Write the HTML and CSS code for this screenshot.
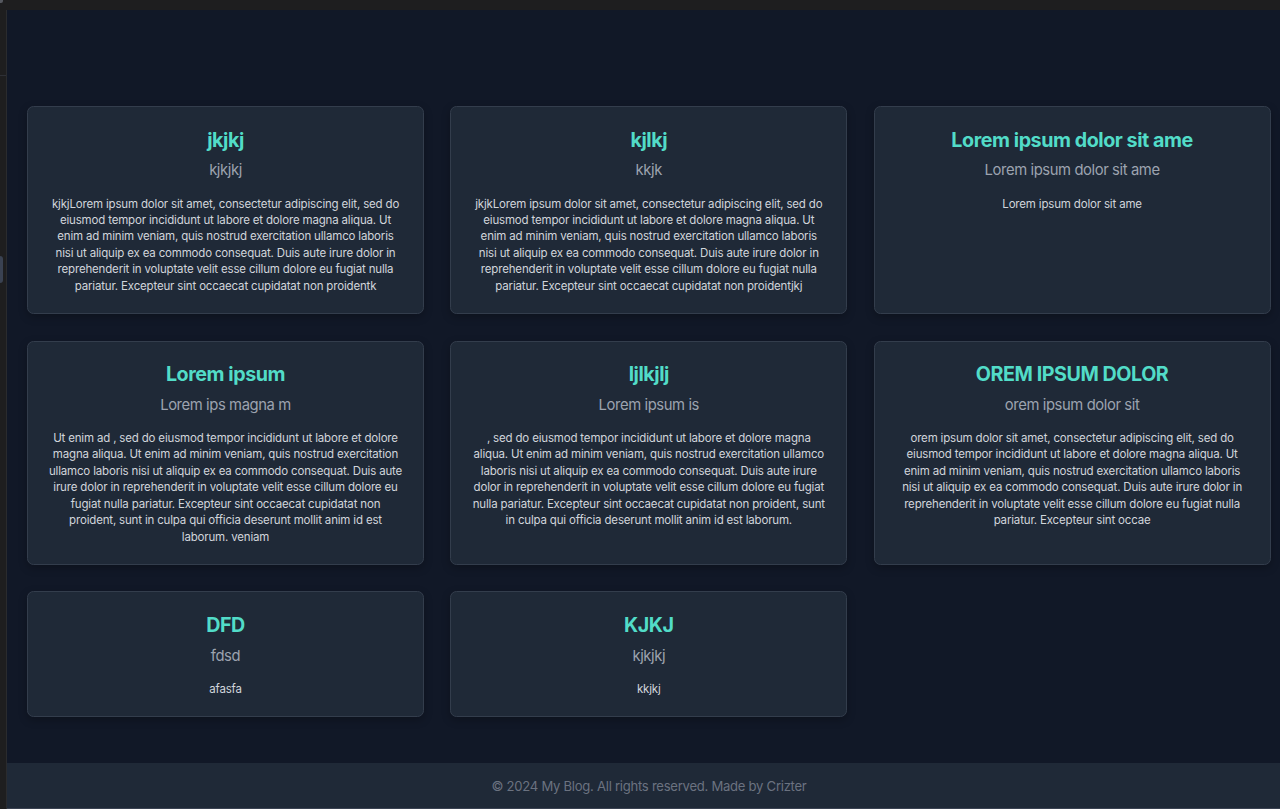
FILE: index.html
```html
<!DOCTYPE html>
<html lang="en">
<head>
<meta charset="utf-8">
<title>My Blog</title>
<link rel="stylesheet" href="styles.css">
</head>
<body>
<div class="chrome-top"><span class="chrome-dot"></span></div>
<div class="shell">
  <div class="chrome-side"><span class="side-line"></span><span class="side-tab"></span></div>
  <div class="page">
    <main class="main">
      <div class="grid">
        <article class="card">
          <h2 class="card-title">jkjkj</h2>
          <h3 class="card-sub">kjkjkj</h3>
          <p class="card-body">kjkjLorem ipsum dolor sit amet, consectetur adipiscing elit, sed do eiusmod tempor incididunt ut labore et dolore magna aliqua. Ut enim ad minim veniam, quis nostrud exercitation ullamco laboris nisi ut aliquip ex ea commodo consequat. Duis aute irure dolor in reprehenderit in voluptate velit esse cillum dolore eu fugiat nulla pariatur. Excepteur sint occaecat cupidatat non proidentk</p>
        </article>
        <article class="card">
          <h2 class="card-title">kjlkj</h2>
          <h3 class="card-sub">kkjk</h3>
          <p class="card-body">jkjkLorem ipsum dolor sit amet, consectetur adipiscing elit, sed do eiusmod tempor incididunt ut labore et dolore magna aliqua. Ut enim ad minim veniam, quis nostrud exercitation ullamco laboris nisi ut aliquip ex ea commodo consequat. Duis aute irure dolor in reprehenderit in voluptate velit esse cillum dolore eu fugiat nulla pariatur. Excepteur sint occaecat cupidatat non proidentjkj</p>
        </article>
        <article class="card">
          <h2 class="card-title">Lorem ipsum dolor sit ame</h2>
          <h3 class="card-sub">Lorem ipsum dolor sit ame</h3>
          <p class="card-body">Lorem ipsum dolor sit ame</p>
        </article>
        <article class="card">
          <h2 class="card-title">Lorem ipsum</h2>
          <h3 class="card-sub">Lorem ips magna m</h3>
          <p class="card-body">Ut enim ad , sed do eiusmod tempor incididunt ut labore et dolore magna aliqua. Ut enim ad minim veniam, quis nostrud exercitation ullamco laboris nisi ut aliquip ex ea commodo consequat. Duis aute irure dolor in reprehenderit in voluptate velit esse cillum dolore eu fugiat nulla pariatur. Excepteur sint occaecat cupidatat non proident, sunt in culpa qui officia deserunt mollit anim id est laborum. veniam</p>
        </article>
        <article class="card">
          <h2 class="card-title">ljlkjlj</h2>
          <h3 class="card-sub">Lorem ipsum is</h3>
          <p class="card-body">, sed do eiusmod tempor incididunt ut labore et dolore magna aliqua. Ut enim ad minim veniam, quis nostrud exercitation ullamco laboris nisi ut aliquip ex ea commodo consequat. Duis aute irure dolor in reprehenderit in voluptate velit esse cillum dolore eu fugiat nulla pariatur. Excepteur sint occaecat cupidatat non proident, sunt in culpa qui officia deserunt mollit anim id est laborum.</p>
        </article>
        <article class="card">
          <h2 class="card-title">OREM IPSUM DOLOR</h2>
          <h3 class="card-sub">orem ipsum dolor sit</h3>
          <p class="card-body">orem ipsum dolor sit amet, consectetur adipiscing elit, sed do eiusmod tempor incididunt ut labore et dolore magna aliqua. Ut enim ad minim veniam, quis nostrud exercitation ullamco laboris nisi ut aliquip ex ea commodo consequat. Duis aute irure dolor in reprehenderit in voluptate velit esse cillum dolore eu fugiat nulla pariatur. Excepteur sint occae</p>
        </article>
        <article class="card">
          <h2 class="card-title">DFD</h2>
          <h3 class="card-sub">fdsd</h3>
          <p class="card-body">afasfa</p>
        </article>
        <article class="card">
          <h2 class="card-title">KJKJ</h2>
          <h3 class="card-sub">kjkjkj</h3>
          <p class="card-body">kkjkj</p>
        </article>
      </div>
    </main>
    <footer class="footer">© 2024 My Blog. All rights reserved. Made by Crizter</footer>
  </div>
</div>
</body>
</html>
```

FILE: styles.css
```css
* { box-sizing: border-box; }
html, body { margin: 0; padding: 0; }
body {
  width: 1280px;
  height: 809px;
  overflow: hidden;
  background: #1e1e1f;
  font-family: Inter, "Noto Sans", "Liberation Sans", sans-serif;
  -webkit-font-smoothing: antialiased;
}
.chrome-top {
  height: 10px;
  background: #1e1e1f;
  position: relative;
}
.chrome-dot {
  position: absolute;
  left: 0;
  top: 0;
  width: 3px;
  height: 3px;
  background: #55585f;
  border-radius: 0 0 2px 0;
}
.shell {
  display: flex;
  height: 799px;
}
.chrome-side {
  width: 7px;
  flex: none;
  background: #1e1e1f;
  border-right: 1px solid #2a2b2e;
  position: relative;
}
.side-line {
  position: absolute;
  left: 0;
  top: 65px;
  width: 6px;
  height: 1px;
  background: #2e3036;
}
.side-tab {
  position: absolute;
  left: -3px;
  top: 246px;
  width: 6px;
  height: 27px;
  border-radius: 3px;
  background: #3a4252;
}
.page {
  width: 1284px;
  flex: none;
  display: flex;
  flex-direction: column;
  background: #111827;
}
.main {
  flex: 1;
  padding: 96px 20px 0 20px;
}
.grid {
  display: grid;
  grid-template-columns: repeat(3, 397px);
  column-gap: 26.3px;
  row-gap: 26.8px;
  align-items: stretch;
}
.card {
  background: #1f2937;
  border: 1px solid #333d4c;
  border-radius: 6.5px;
  padding: 18.7px 19.9px;
  text-align: center;
  box-shadow: 0 3px 8px rgba(0, 0, 0, 0.25);
}
.card-title {
  margin: 0 0 6.6px;
  padding-top: 1px;
  font-size: 19.7px;
  line-height: 26.2px;
  font-weight: 700;
  letter-spacing: -0.45px;
  color: #52dcc8;
}
.card-sub {
  margin: 0 0 13.1px;
  font-size: 14.8px;
  line-height: 23px;
  font-weight: 400;
  letter-spacing: -0.4px;
  color: #9ca3af;
}
.card-body {
  margin: 0;
  font-size: 11.5px;
  line-height: 16.4px;
  letter-spacing: -0.17px;
  color: #d1d5db;
}
.footer {
  height: 46px;
  background: #1f2937;
  color: #6b7280;
  font-size: 13.1px;
  line-height: 19.7px;
  letter-spacing: -0.27px;
  padding: 13.6px 0 12.6px;
  text-align: center;
  border-bottom: 1px solid #3a4252;
}
```
